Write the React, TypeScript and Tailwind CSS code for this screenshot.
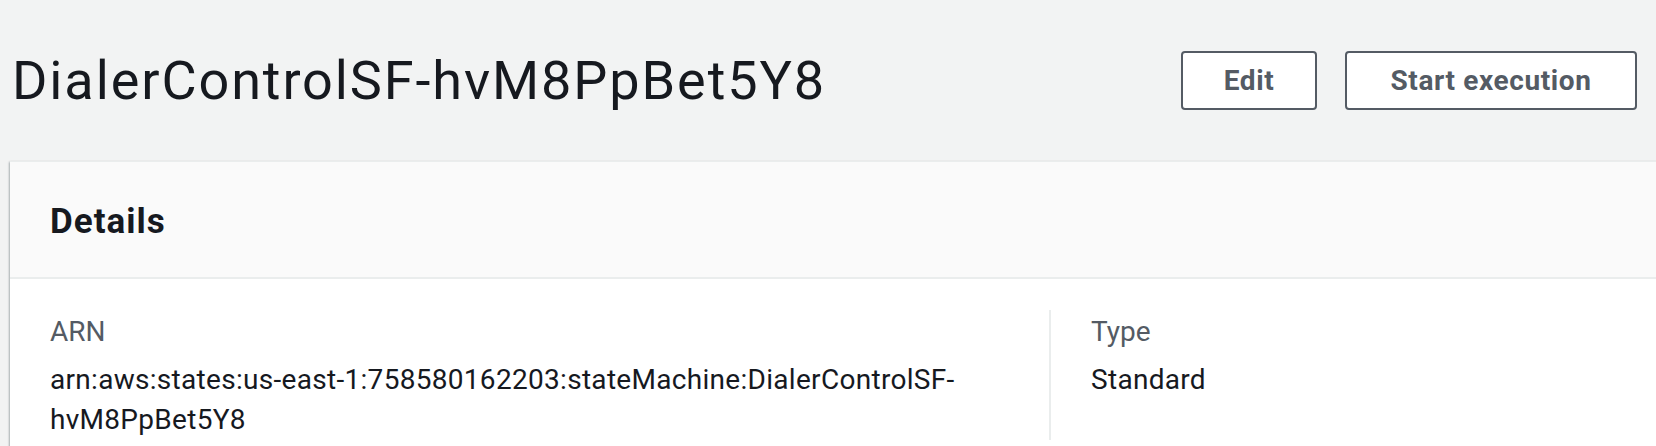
const font = { fontFamily: 'Roboto, "Noto Sans", Arial, sans-serif' };

function OutlineButton({ label, width }: { label: string; width: string }) {
  return (
    <button
      className={`${width} h-[59px] rounded-[4px] border-2 border-[#545b64] bg-white text-[28px] font-bold tracking-[0.6px] text-[#545b64] leading-none`}
    >
      {label}
    </button>
  );
}

export default function App() {
  return (
    <div className="h-[446px] w-[1656px] overflow-hidden bg-[#f2f3f3] text-[#16191f]" style={font}>
      <div className="flex h-[161px] items-center justify-between pl-[12px] pr-[19px]">
        <h1 className="text-[54px] font-normal tracking-[1.9px]">DialerControlSF-hvM8PpBet5Y8</h1>
        <div className="flex gap-[28px]">
          <OutlineButton label="Edit" width="w-[136px]" />
          <OutlineButton label="Start execution" width="w-[292px]" />
        </div>
      </div>

      <div className="ml-[10px] w-[1680px] border-t border-[#eaeded] bg-white shadow-[0_1px_2px_0_rgba(0,28,36,0.3),-1px_1px_2px_0_rgba(0,28,36,0.2)]">
        <div className="border-b-2 border-[#eaeded] bg-[#fafafa] px-[40px] pt-[36px] pb-[31px]">
          <h2 className="text-[35px] font-bold leading-[48px] tracking-[1px]">Details</h2>
        </div>
        <div className="flex pt-[31px] pb-[40px] pl-[40px]">
          <div className="w-[999px] pr-[40px] pt-[2px]">
            <div className="text-[28px] leading-[40px] text-[#545b64]">ARN</div>
            <div className="mt-[8px] break-words text-[28px] leading-[40px] tracking-[0.3px]">
              arn:aws:states:us-east-1:758580162203:stateMachine:DialerControlSF-hvM8PpBet5Y8
            </div>
          </div>
          <div className="border-l-2 border-[#eaeded] pl-[40px] pt-[2px]">
            <div className="text-[28px] leading-[40px] text-[#545b64]">Type</div>
            <div className="mt-[8px] text-[28px] leading-[40px] tracking-[0.3px]">Standard</div>
          </div>
        </div>
      </div>
    </div>
  );
}
